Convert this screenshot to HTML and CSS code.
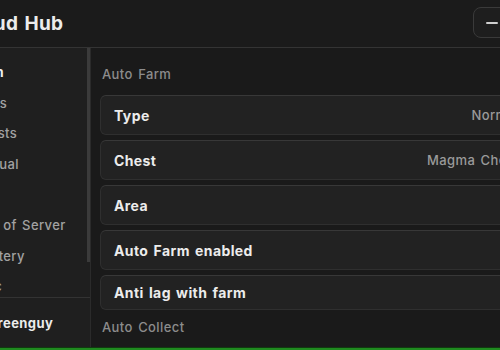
FILE: index.html
```html
<!DOCTYPE html>
<html>
<head>
<meta charset="utf-8">
<link rel="stylesheet" href="styles.css">
</head>
<body>
<div class="window">
  <header class="header">
    <div class="title">Cloud Hub</div>
    <div class="win-btn"><span class="dash"></span></div>
  </header>
  <div class="main">
    <aside class="sidebar">
      <div class="tabs">
        <div class="tab active">Main</div>
        <div class="tab">Items</div>
        <div class="tab">Quests</div>
        <div class="tab">Manual</div>
        <div class="tab">ESP</div>
        <div class="tab">Hop of Server</div>
        <div class="tab">Mystery</div>
        <div class="tab">Misc</div>
      </div>
      <div class="scrollbar"></div>
      <div class="user">greenguy</div>
    </aside>
    <section class="content">
      <div class="section-label">Auto Farm</div>
      <div class="rows">
        <div class="row"><span class="row-name">Type</span><span class="row-value">Normal</span></div>
        <div class="row"><span class="row-name">Chest</span><span class="row-value">Magma Chest</span></div>
        <div class="row"><span class="row-name">Area</span></div>
        <div class="row"><span class="row-name">Auto Farm enabled</span></div>
        <div class="row short"><span class="row-name">Anti lag with farm</span></div>
      </div>
      <div class="section-label second">Auto Collect</div>
    </section>
  </div>
  <div class="green-bar"></div>
</div>
</body>
</html>
```
FILE: styles.css
```css
html, body {
  margin: 0;
  padding: 0;
  width: 500px;
  height: 350px;
  overflow: hidden;
  background: #1a1a1a;
}
.window {
  width: 600px;
  height: 350px;
  margin-left: -48px;
  display: flex;
  flex-direction: column;
  background: #1a1a1a;
  font-family: Inter, "Noto Sans", sans-serif;
  color: #e6e6e6;
  letter-spacing: 0.4px;
  word-spacing: 1.5px;
}
.header {
  height: 47px;
  flex: none;
  border-bottom: 1px solid #343434;
  display: flex;
  align-items: center;
  justify-content: space-between;
  padding-left: 10px;
  background: #1b1b1b;
}
.title {
  font-size: 19px;
  font-weight: 700;
  color: #ececec;
  letter-spacing: 0.3px;
}
.win-btn {
  width: 60px;
  height: 31px;
  margin-right: 19px;
  margin-top: -2px;
  border: 1px solid #3a3a3a;
  border-radius: 8px;
  background: #1e1e1e;
  display: flex;
  align-items: center;
  padding-left: 12px;
  box-sizing: border-box;
}
.dash {
  width: 12px;
  height: 2px;
  background: #cfcfcf;
  border-radius: 1px;
}
.main {
  flex: 1;
  display: flex;
  min-height: 0;
}
.sidebar {
  width: 138px;
  flex: none;
  position: relative;
  display: flex;
  flex-direction: column;
  background: #1f1f1f;
  border-right: 1px solid #2b2b2b;
}
.tabs {
  height: 249px;
  overflow: hidden;
  padding-top: 9px;
  box-sizing: border-box;
}
.tab {
  height: 30.6px;
  line-height: 30.6px;
  padding-left: 19px;
  font-size: 13px;
  font-weight: 500;
  color: #a2a2a2;
  white-space: nowrap;
}
.tab.active {
  color: #f0f0f0;
  font-weight: 700;
}
.scrollbar {
  position: absolute;
  right: 0;
  top: 0;
  width: 3px;
  height: 214px;
  background: #3b3b3b;
}
.user {
  border-top: 1px solid #333;
  flex: 1;
  display: flex;
  align-items: center;
  padding-left: 37px;
  font-size: 13px;
  font-weight: 700;
  color: #ececec;
}
.content {
  flex: 1;
  padding: 13px 9px 0 9px;
  background: #1a1a1a;
}
.section-label {
  height: 26px;
  line-height: 26px;
  padding-left: 2px;
  margin-bottom: 8px;
  font-size: 13px;
  font-weight: 500;
  color: #8c8c8c;
}
.section-label.second {
  margin-top: 4px;
}
.rows {
  display: flex;
  flex-direction: column;
  gap: 5px;
}
.row {
  height: 40px;
  box-sizing: border-box;
  background: #222222;
  border: 1px solid #2f2f2f;
  border-top-color: #383838;
  border-radius: 6px;
  display: flex;
  align-items: center;
  justify-content: space-between;
  padding: 0 23px 0 13px;
}
.row.short {
  height: 35px;
}
.row-name {
  font-size: 14px;
  font-weight: 700;
  color: #ececec;
}
.row-value {
  font-size: 13px;
  font-weight: 500;
  color: #9a9a9a;
}
.green-bar {
  height: 2px;
  flex: none;
  background: #1f8a1f;
  border-top: 1px solid #103a10;
}
```
